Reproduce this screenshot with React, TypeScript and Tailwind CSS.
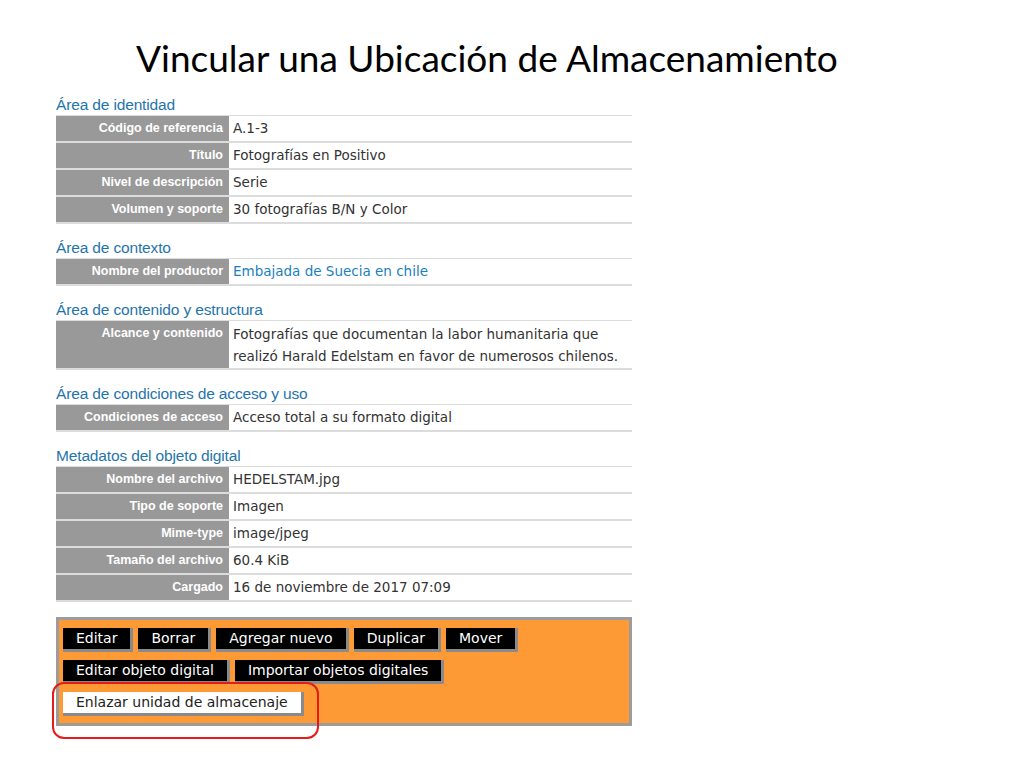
import React from "react";

type Row = { label: string; value: React.ReactNode; link?: boolean; multi?: boolean };

const sections: { title: string; rows: Row[] }[] = [
  {
    title: "Área de identidad",
    rows: [
      { label: "Código de referencia", value: "A.1-3" },
      { label: "Título", value: "Fotografías en Positivo" },
      { label: "Nivel de descripción", value: "Serie" },
      { label: "Volumen y soporte", value: "30 fotografías B/N y Color" },
    ],
  },
  {
    title: "Área de contexto",
    rows: [{ label: "Nombre del productor", value: "Embajada de Suecia en chile", link: true }],
  },
  {
    title: "Área de contenido y estructura",
    rows: [
      {
        label: "Alcance y contenido",
        multi: true,
        value: (
          <>
            Fotografías que documentan la labor humanitaria que
            <br />
            realizó Harald Edelstam en favor de numerosos chilenos.
          </>
        ),
      },
    ],
  },
  {
    title: "Área de condiciones de acceso y uso",
    rows: [{ label: "Condiciones de acceso", value: "Acceso total a su formato digital" }],
  },
  {
    title: "Metadatos del objeto digital",
    rows: [
      { label: "Nombre del archivo", value: "HEDELSTAM.jpg" },
      { label: "Tipo de soporte", value: "Imagen" },
      { label: "Mime-type", value: "image/jpeg" },
      { label: "Tamaño del archivo", value: "60.4 KiB" },
      { label: "Cargado", value: "16 de noviembre de 2017 07:09" },
    ],
  },
];

const Btn = ({ children, light }: { children: React.ReactNode; light?: boolean }) => (
  <span
    className={
      "inline-block h-[24px] px-[13px] border-r-[3px] border-b-[3px] border-[#8a8a8a] text-[14px] leading-[21px] font-['DejaVu_Sans',sans-serif] " +
      (light ? "bg-white text-[#222]" : "bg-black text-white")
    }
  >
    {children}
  </span>
);

const App = () => {
  return (
    <div className="w-[1024px] h-[768px] bg-white relative overflow-hidden">
      <h1 className="pl-[136px] pt-[35px] h-[93px] text-[37px] leading-[46px] text-black font-['Lato',sans-serif]">
        Vincular una Ubicación de Almacenamiento
      </h1>

      <div className="ml-[56px] w-[576px]">
        {sections.map((s, i) => (
          <div key={s.title} className={i === 0 ? "" : "mt-[12px]"}>
            <div className="h-[22px] pt-[2px] text-[15.5px] leading-[20px] text-[#1f74ab] font-['Liberation_Sans',sans-serif] tracking-[-0.15px]">
              {s.title}
            </div>
            <div className="border-t border-[#dcdcdc]">
              {s.rows.map((r) => (
                <div key={r.label} className="flex border-b-2 border-[#dcdcdc]">
                  <div className="w-[173px] shrink-0 bg-[#999999] text-white font-bold text-[12.5px] leading-[25px] text-right pr-[6px] font-['Liberation_Sans',sans-serif]">
                    {r.label}
                  </div>
                  <div
                    className={
                      "pl-[4px] text-[13.5px] font-['DejaVu_Sans',sans-serif] " +
                      (r.multi ? "leading-[22px] pt-[2px] pb-[1px] " : "leading-[25px] ") +
                      (r.link ? "text-[#1a7fc0]" : "text-[#333]")
                    }
                  >
                    {r.value}
                  </div>
                </div>
              ))}
            </div>
          </div>
        ))}

        <div className="mt-[15px] h-[109px] bg-[#fd9a35] border-[3px] border-[#9c9c9c] pt-[8px] pl-[4px] flex flex-col gap-[8px]">
          <div className="flex gap-[5px]">
            <Btn>Editar</Btn>
            <Btn>Borrar</Btn>
            <Btn>Agregar nuevo</Btn>
            <Btn>Duplicar</Btn>
            <Btn>Mover</Btn>
          </div>
          <div className="flex gap-[5px]">
            <Btn>Editar objeto digital</Btn>
            <Btn>Importar objetos digitales</Btn>
          </div>
          <div className="flex">
            <Btn light>Enlazar unidad de almacenaje</Btn>
          </div>
        </div>
      </div>

      <div className="absolute left-[52px] top-[682px] w-[267px] h-[57px] border-2 border-[#e31b1b] rounded-[12px]" />
    </div>
  );
};

export default App;
